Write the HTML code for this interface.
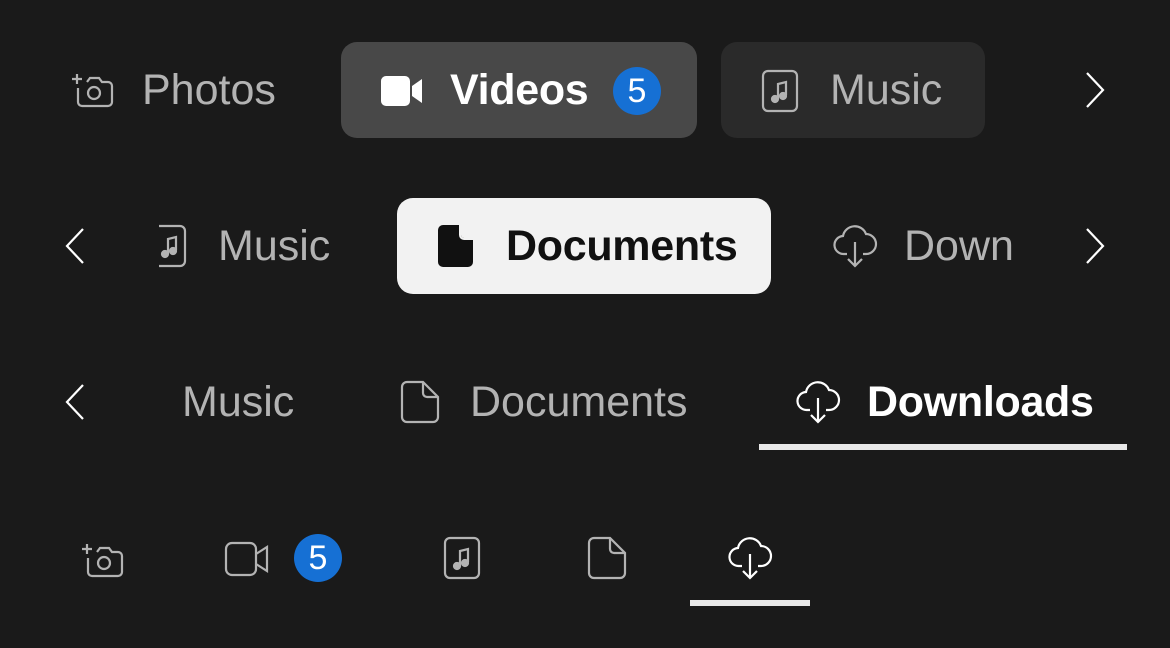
<!DOCTYPE html><html><head><style>
body{margin:0;width:1170px;height:648px;background:#1a1a1a;font-family:"Liberation Sans",sans-serif;position:relative;overflow:hidden}
.a{position:absolute}
.t{position:absolute;font-size:43px;line-height:43px;color:#b3b3b3;letter-spacing:0}
.b{font-weight:bold;letter-spacing:-0.3px}
svg{position:absolute;overflow:visible}
</style></head><body>
<!-- Row 1 -->
<svg style="left:70px;top:72px" width="44" height="36" viewBox="0 0 44 36" fill="none" stroke="#b3b3b3" stroke-width="2.2"><path d="M2 7h10M7 2v10"/><path d="M8 16v14a4 4 0 0 0 4 4h26a4 4 0 0 0 4-4V14a4 4 0 0 0-4-4h-6l-3-4h-9l-3 4"/><circle cx="24" cy="21" r="6"/></svg>
<div class="t" style="left:142px;top:69px">Photos</div>
<div class="a" style="left:341px;top:42px;width:356px;height:96px;background:#484848;border-radius:16px"></div>
<svg style="left:381px;top:76px" width="42" height="30" viewBox="0 0 42 30"><rect x="0" y="0" width="29" height="30" rx="5" fill="#fff"/><path d="M31 10l10-7v24l-10-7z" fill="#fff"/></svg>
<div class="t b" style="left:450px;top:69px;color:#fff">Videos</div>
<div class="a" style="left:613px;top:67px;width:48px;height:48px;border-radius:50%;background:#1670d4;color:#fff;font-size:34px;line-height:48px;text-align:center">5</div>
<div class="a" style="left:721px;top:42px;width:264px;height:96px;background:#2a2a2a;border-radius:16px"></div>
<svg style="left:762px;top:70px" width="36" height="42" viewBox="0 0 36 42" fill="none" stroke="#b3b3b3" stroke-width="2.2"><rect x="1" y="1" width="34" height="40" rx="5"/><path d="M16 29V14l8-2v13"/><circle cx="13" cy="29" r="3" fill="#b3b3b3"/><circle cx="21" cy="26" r="3" fill="#b3b3b3"/></svg>
<div class="t" style="left:830px;top:69px">Music</div>
<svg style="left:1085px;top:72px" width="20" height="36" fill="none" stroke="#fff" stroke-width="2.2"><path d="M2 1l16 17L2 35"/></svg>
<!-- Row 2 -->
<svg style="left:65px;top:228px" width="20" height="36" fill="none" stroke="#fff" stroke-width="2.2"><path d="M18 1L2 18l16 17"/></svg>
<svg style="left:158px;top:225px" width="28" height="42" viewBox="0 0 28 42" fill="none" stroke="#b3b3b3" stroke-width="2.2"><path d="M1 1h21a5 5 0 0 1 5 5v30a5 5 0 0 1-5 5H1"/><path d="M10 29V14l8-2v13"/><circle cx="7" cy="29" r="3" fill="#b3b3b3"/><circle cx="15" cy="26" r="3" fill="#b3b3b3"/></svg>
<div class="t" style="left:218px;top:225px">Music</div>
<div class="a" style="left:397px;top:198px;width:374px;height:96px;background:#f2f2f2;border-radius:16px"></div>
<svg style="left:438px;top:225px" width="36" height="42" viewBox="0 0 36 42"><path d="M5 0h16l14 14v23a5 5 0 0 1-5 5H5a5 5 0 0 1-5-5V5a5 5 0 0 1 5-5z" fill="#111"/><path d="M23 0v10a3 3 0 0 0 3 3h9" fill="#f2f2f2"/><path d="M22 0v10a4 4 0 0 0 4 4h9" fill="none" stroke="#f2f2f2" stroke-width="2"/></svg>
<div class="t b" style="left:506px;top:225px;color:#111">Documents</div>
<svg style="left:834px;top:224px" width="42" height="44" viewBox="0 0 42 44" fill="none" stroke="#b3b3b3" stroke-width="2.2"><path d="M13 30H10a9 9 0 0 1-1-18A12 12 0 0 1 32 10a9 9 0 0 1 0 20h-3"/><path d="M21 18v24M14 35l7 7 7-7"/></svg>
<div class="t" style="left:904px;top:225px">Down</div>
<svg style="left:1085px;top:228px" width="20" height="36" fill="none" stroke="#fff" stroke-width="2.2"><path d="M2 1l16 17L2 35"/></svg>
<!-- Row 3 -->
<svg style="left:65px;top:384px" width="20" height="36" fill="none" stroke="#fff" stroke-width="2.2"><path d="M18 1L2 18l16 17"/></svg>
<div class="t" style="left:182px;top:381px">Music</div>
<svg style="left:401px;top:381px" width="38" height="42" viewBox="0 0 38 42" fill="none" stroke="#b3b3b3" stroke-width="2.2"><path d="M6 1h16l15 15v20a5 5 0 0 1-5 5H6a5 5 0 0 1-5-5V6a5 5 0 0 1 5-5z"/><path d="M22 1v11a4 4 0 0 0 4 4h11"/></svg>
<div class="t" style="left:470px;top:381px">Documents</div>
<svg style="left:797px;top:380px" width="42" height="44" viewBox="0 0 42 44" fill="none" stroke="#fff" stroke-width="2.2"><path d="M13 30H10a9 9 0 0 1-1-18A12 12 0 0 1 32 10a9 9 0 0 1 0 20h-3"/><path d="M21 18v24M14 35l7 7 7-7"/></svg>
<div class="t b" style="left:867px;top:381px;color:#fff">Downloads</div>
<div class="a" style="left:759px;top:444px;width:368px;height:6px;background:#e8e8e8"></div>
<!-- Row 4 -->
<svg style="left:80px;top:542px" width="44" height="36" viewBox="0 0 44 36" fill="none" stroke="#b3b3b3" stroke-width="2.2"><path d="M2 7h10M7 2v10"/><path d="M8 16v14a4 4 0 0 0 4 4h26a4 4 0 0 0 4-4V14a4 4 0 0 0-4-4h-6l-3-4h-9l-3 4"/><circle cx="24" cy="21" r="6"/></svg>
<svg style="left:225px;top:542px" width="44" height="34" viewBox="0 0 44 34" fill="none" stroke="#b3b3b3" stroke-width="2.2"><rect x="1" y="1" width="30" height="32" rx="6"/><path d="M31 12l11-7v24l-11-7"/></svg>
<div class="a" style="left:294px;top:534px;width:48px;height:48px;border-radius:50%;background:#1670d4;color:#fff;font-size:34px;line-height:48px;text-align:center">5</div>
<svg style="left:444px;top:537px" width="36" height="42" viewBox="0 0 36 42" fill="none" stroke="#b3b3b3" stroke-width="2.2"><rect x="1" y="1" width="34" height="40" rx="5"/><path d="M16 29V14l8-2v13"/><circle cx="13" cy="29" r="3" fill="#b3b3b3"/><circle cx="21" cy="26" r="3" fill="#b3b3b3"/></svg>
<svg style="left:588px;top:537px" width="38" height="42" viewBox="0 0 38 42" fill="none" stroke="#b3b3b3" stroke-width="2.2"><path d="M6 1h16l15 15v20a5 5 0 0 1-5 5H6a5 5 0 0 1-5-5V6a5 5 0 0 1 5-5z"/><path d="M22 1v11a4 4 0 0 0 4 4h11"/></svg>
<svg style="left:729px;top:536px" width="42" height="44" viewBox="0 0 42 44" fill="none" stroke="#fff" stroke-width="2.2"><path d="M13 30H10a9 9 0 0 1-1-18A12 12 0 0 1 32 10a9 9 0 0 1 0 20h-3"/><path d="M21 18v24M14 35l7 7 7-7"/></svg>
<div class="a" style="left:690px;top:600px;width:120px;height:6px;background:#e8e8e8"></div>
</body></html>
